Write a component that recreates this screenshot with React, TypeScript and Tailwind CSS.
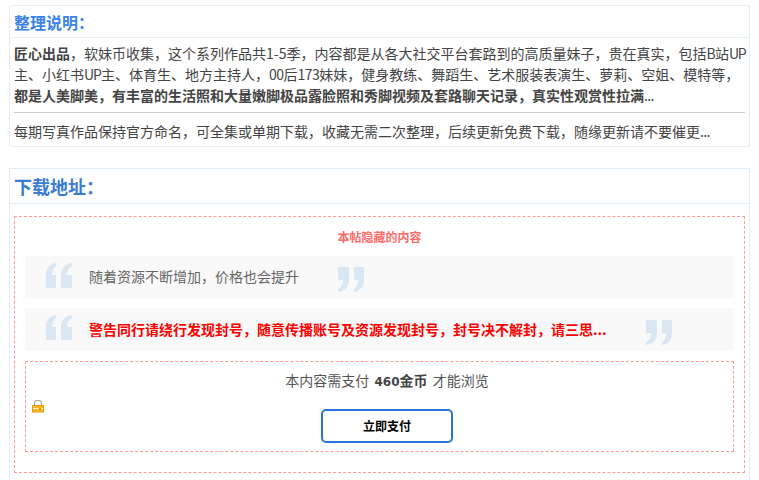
function QuoteMark({ close, className }: { close?: boolean; className?: string }) {
  return (
    <svg width="26" height="25" viewBox="0 0 26 25" className={className} fill="#dae7f3">
      <g transform={close ? "rotate(180 13 12.5)" : undefined}>
        <path d="M0 25V12C0 5 4 1 10 0V3C7 5 6 8 6 12H10V25Z" />
        <path d="M15 25V12C15 5 19 1 26 0V3C22 5 21 8 21 12H26V25Z" />
      </g>
    </svg>
  );
}

function Lock() {
  return (
    <svg width="12" height="13" viewBox="0 0 12 13" className="block">
      <path d="M2.5 5.500V3C2.5 1.300 4 0.500 6 0.500s3.500.8 3.500 2.500V5.500" fill="none" stroke="#a8a8a8" strokeWidth="1.200" />
      <rect x="0.500" y="5.500" width="11" height="6.500" fill="#fbb62a" stroke="#e69a10" />
      <rect x="1" y="8" width="10" height="1" fill="#fff2c4" />
      <rect x="7" y="8" width="2" height="2" fill="#e69a10" />
    </svg>
  );
}

export default function App() {
  return (
    <div
      className="h-[480px] w-[759px] overflow-hidden bg-white text-[14px] text-[#444]"
      style={{ fontFamily: '"Noto Sans CJK SC", "Liberation Sans", sans-serif' }}
    >
      <div className="ml-[9px] mt-[5px] w-[741px] border border-[#e6eef5]">
        <div className="flex h-[32px] items-center border-b border-[#e6eef5] pl-[4px] text-[16px] font-bold leading-none text-[#3b82e8]">
          整理说明：
        </div>
        <div className="px-[4px] pt-[5px]">
          <p className="text-[14px] leading-[21px] whitespace-nowrap">
            <strong>匠心出品</strong>，软妹币收集，这个系列作品共1-5季，内容都是从各大社交平台套路到的高质量妹子，贵在真实，包括<span className="tracking-[-0.5px]">B</span>站<span className="tracking-[-1.5px]">UP</span>
            <br />
            主、小红书<span className="tracking-[-1px]">UP</span>主、体育生、地方主持人，<span className="tracking-[-0.5px]">00</span>后<span className="tracking-[-0.5px]">173</span>妹妹，健身教练、舞蹈生、艺术服装表演生、萝莉、空姐、模特等，
            <br />
            <strong>都是人美脚美，有丰富的生活照和大量嫩脚极品露脸照和秀脚视频及套路聊天记录，真实性观赏性拉满</strong><span className="tracking-[-0.7px]">...</span>
          </p>
          <div className="mt-[6px] border-t border-[#ccc]" />
          <p className="mt-[8px] pb-[4px] leading-[21px] whitespace-nowrap">
            每期写真作品保持官方命名，可全集或单期下载，收藏无需二次整理，后续更新免费下载，随缘更新请不要催更<span className="tracking-[-0.7px]">...</span>
          </p>
        </div>
      </div>

      <div className="ml-[9px] mt-[21px] w-[741px] border border-[#e1edf7] pb-[8px]">
        <div className="flex h-[35px] items-center border-b border-[#e1edf7] pl-[4px] text-[18px] font-bold leading-none text-[#3a7bd5]">
          下载地址：
        </div>
        <div className="mx-[4px] mt-[12px] border border-dashed border-[#ff9a9a] px-[10px] pb-[20px] pt-[11px]">
          <div className="text-center text-[12px] font-bold leading-[17px] text-[#ff6b6b]">本帖隐藏的内容</div>
          <div className="mt-[11px] flex h-[42px] bg-[#f9f9f9] pl-[21px]">
            <QuoteMark className="mt-[7px] shrink-0" />
            <div className="ml-[17px] pt-[10px] text-[14px] leading-[20px] text-[#666]">随着资源不断增加，价格也会提升</div>
            <QuoteMark close className="ml-[39px] mt-[11px] shrink-0" />
          </div>
          <div className="mt-[10px] flex h-[43px] bg-[#f9f9f9] pl-[21px]">
            <QuoteMark className="mt-[7px] shrink-0" />
            <div className="ml-[17px] pt-[11px] text-[14px] font-bold leading-[20px] text-[#f00]">
              警告同行请绕行发现封号，随意传播账号及资源发现封号，封号决不解封，请三思...
            </div>
            <QuoteMark close className="ml-[39px] mt-[12px] shrink-0" />
          </div>
          <div className="mt-[10px] flex h-[91px] border border-dashed border-[#ff9a9a]">
            <div className="ml-[6px] shrink-0 self-center">
              <Lock />
            </div>
            <div className="flex-1 pr-[3px] pt-[8px] text-center">
              <div className="text-[14px] leading-[20px] text-[#555]">
                本内容需支付 <strong className="ml-[2px] text-[12px] text-[#444]" style={{ fontFamily: '"DejaVu Sans", "Noto Sans CJK SC", sans-serif' }}>460</strong>
                <strong className="mr-[2px] text-[#444]">金币</strong> 才能浏览
              </div>
              <button className="mx-auto mt-[17px] flex h-[34px] w-[132px] items-center justify-center rounded-[5px] border-2 border-[#2a75d8] bg-white text-[12px] font-bold text-black">
                立即支付
              </button>
            </div>
          </div>
        </div>
      </div>
    </div>
  );
}
